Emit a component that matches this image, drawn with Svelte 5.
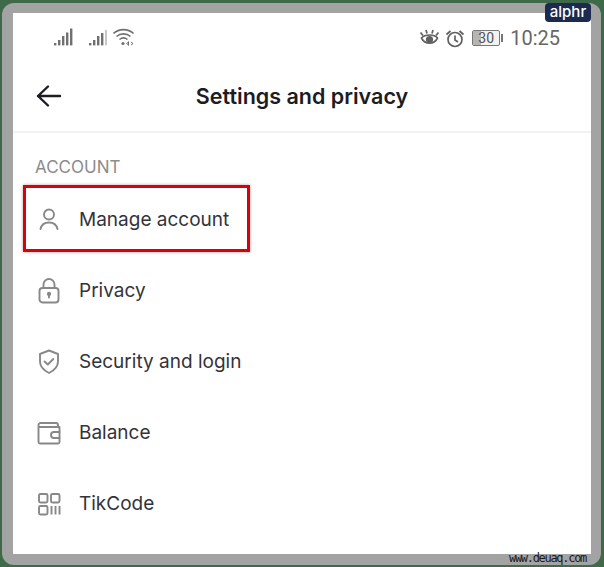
<script lang="ts">
  const rows = [
    { id: 'user', label: 'Manage account', boxed: true },
    { id: 'lock', label: 'Privacy' },
    { id: 'shield', label: 'Security and login' },
    { id: 'wallet', label: 'Balance' },
    { id: 'code', label: 'TikCode' }
  ];
</script>

<div class="page">
  <div class="frame">
    <div class="screen">
      <div class="status">
        <div class="signals">
          <svg class="sig" width="20" height="19" viewBox="0 0 20 19" fill="#707070">
            <rect x="0" y="15" width="2.400" height="2.400" /><rect x="4" y="12" width="2.400" height="5.400" />
            <rect x="8" y="8" width="2.400" height="9.400" /><rect x="12" y="4.500" width="2.400" height="12.900" />
            <rect x="16" y="0.500" width="2.400" height="16.900" />
          </svg>
          <svg class="sig2" width="20" height="19" viewBox="0 0 20 19" fill="#707070">
            <rect x="0" y="15" width="2.400" height="2.400" /><rect x="4" y="12" width="2.400" height="5.400" />
            <rect x="8" y="8" width="2.400" height="9.400" /><rect x="12" y="5" width="2.400" height="12.400" />
            <rect x="16" y="2" width="2" height="15.400" fill="#c8c8c8" />
          </svg>
          <svg width="22" height="19" viewBox="0 0 22 19" fill="none" stroke="#707070" stroke-width="1.600">
            <path d="M0.500 5.500 C6 .3 15 .3 20.500 5.500" /><path d="M3.500 8.500 C7.500 5 13.500 5 17.500 8.500" />
            <path d="M6.500 11.500 C9 9.500 12 9.500 14.500 11.500" />
            <circle cx="10" cy="15.500" r="1.600" fill="#707070" stroke="none" />
            <path d="M15.500 13.500v4M15.500 14l-2 1.500 2 1.500M18 14l2 1.500-2 1.500" stroke-width="1" />
          </svg>
        </div>
        <div class="indicators">
          <svg width="21" height="18" viewBox="0 0 21 18" fill="none" stroke="#606060" stroke-width="1.700">
            <path d="M2.500 9 C6 5 15 5 18.500 9 C15 16 6 16 2.500 9Z" />
            <circle cx="10.500" cy="10.500" r="3.600" fill="#606060" stroke="none" />
            <path d="M1.500 3.500l2.500 3M7 1l1 3.600M14 1l-1 3.600M19.500 3.500l-2.500 3" />
          </svg>
          <svg width="20" height="19" viewBox="0 0 20 19" fill="none" stroke="#606060" stroke-width="1.700">
            <circle cx="10" cy="10.500" r="7" />
            <path d="M10 6.500v4.500l3 2" />
            <path d="M1.500 5.500l4-3.500M18.500 5.500l-4-3.500" />
          </svg>
          <div class="battery">
            <div class="cell"><span class="charge"></span><span class="pct">30</span></div>
            <span class="nub"></span>
          </div>
          <span class="time">10:25</span>
        </div>
      </div>

      <header class="header">
        <svg class="back" width="26" height="24" viewBox="0 0 26 24" fill="none" stroke="#1c1c22" stroke-width="2.400" stroke-linecap="round" stroke-linejoin="round">
          <path d="M2 12h22M12 2.500L2 12l10 9.500" />
        </svg>
        <h1>Settings and privacy</h1>
      </header>

      <div class="section">ACCOUNT</div>

      <ul class="list">
        {#each rows as row}
          <li class="row" class:boxed={row.boxed}>
            <svg width="24" height="26" viewBox="0 0 24 26" fill="none" stroke="#888" stroke-width="1.900" stroke-linecap="round" stroke-linejoin="round">
              {#if row.id === 'user'}
                <circle cx="12" cy="7.500" r="5" />
                <path d="M3.500 22c1-4.500 4-6.500 8.500-6.500s7.500 2 8.500 6.500" />
              {:else if row.id === 'lock'}
                <rect x="2.500" y="10" width="19" height="14.500" rx="3" />
                <path d="M6.500 10V6.500a5.500 5.500 0 0 1 11 0V10" />
                <circle cx="12" cy="16" r="1.200" fill="#888" />
                <path d="M12 16.500v3" />
              {:else if row.id === 'shield'}
                <path d="M12 1.500l9 3.500V12.500c0 5.500-4 9-9 11.500-5-2.500-9-6-9-11.500V5z" />
                <path d="M7.500 12.500l3.300 3 5.500-5.500" />
              {:else if row.id === 'wallet'}
                <path d="M21 6V5a2 2 0 0 0-2-2H3.500a2 2 0 0 0-2 2v17a1.500 1.500 0 0 0 1.500 1.500h18a1.500 1.500 0 0 0 1.500-1.500V7H2" />
                <path d="M22.500 12h-5.500a2.500 2.500 0 0 0 0 6h5.500" />
              {:else}
                <rect x="2" y="3" width="8.500" height="8.500" rx="1.500" />
                <rect x="14" y="3" width="8.500" height="8.500" rx="1.500" />
                <rect x="2" y="15" width="8.500" height="8.500" rx="1.500" />
                <path d="M14.500 15v8.500M18.500 15v8.500M22.500 15v8.500" stroke-linecap="butt" />
              {/if}
            </svg>
            <span>{row.label}</span>
          </li>
        {/each}
      </ul>
    </div>
    <div class="badge">alphr</div>
    <div class="mark">www.deuaq.com</div>
  </div>
</div>

<style>
  :global(body) {
    margin: 0;
    background: #3f6a4a;
  }

  .page {
    width: 604px;
    height: 567px;
    padding: 3px 3px 2px 2px;
    box-sizing: border-box;
  }

  .frame {
    position: relative;
    height: 100%;
    box-sizing: border-box;
    padding: 10px 10px 11px 11px;
    background: #a3a3a3;
    border-radius: 12px;
  }

  .screen {
    height: 100%;
    background: #fff;
    font-family: Inter, "Liberation Sans", sans-serif;
    color: #33333a;
    overflow: hidden;
  }

  .status {
    height: 49px;
    box-sizing: border-box;
    display: flex;
    justify-content: space-between;
    align-items: flex-start;
    padding: 15px 31px 0 41px;
  }

  .signals {
    display: flex;
    align-items: center;
    gap: 4px;
  }

  .sig {
    margin-right: 11px;
  }

  .indicators {
    display: flex;
    align-items: center;
    gap: 5px;
  }

  .battery {
    display: flex;
    align-items: center;
    gap: 1px;
    margin-left: 2px;
  }

  .cell {
    position: relative;
    width: 26px;
    height: 14px;
    border: 1px solid #777;
    border-radius: 2px;
    display: flex;
    align-items: center;
    justify-content: center;
    background: #f2f2f2;
  }

  .charge {
    position: absolute;
    left: 0;
    top: 0;
    bottom: 0;
    width: 8px;
    background: #b5b5b5;
  }

  .pct {
    position: relative;
    font: 14px Roboto, sans-serif;
    color: #555;
  }

  .nub {
    width: 2px;
    height: 8px;
    background: #777;
  }

  .time {
    margin-left: 2px;
    font: 20px/1 Roboto, sans-serif;
    color: #666;
  }

  .header {
    position: relative;
    height: 69px;
    box-sizing: content-box;
    padding-bottom: 0;
    display: flex;
    align-items: flex-start;
    justify-content: center;
    border-bottom: 2px solid #f2f2f2;
  }

  .back {
    position: absolute;
    left: 23px;
    top: 22px;
  }

  h1 {
    margin: 21px 0 0;
    font-size: 21.500px;
    line-height: 26px;
    font-weight: 600;
    color: #1c1c22;
  }

  .section {
    margin: 25px 0 0 22px;
    font-size: 17px;
    line-height: 19px;
    color: #8c8c8c;
  }

  .list {
    list-style: none;
    margin: 8px 0 0 10px;
    padding: 0;
  }

  .row {
    width: 227px;
    height: 67px;
    box-sizing: border-box;
    margin-bottom: 4px;
    padding: 2px 0 0 11px;
    border: 3px solid transparent;
    display: flex;
    align-items: center;
    gap: 18px;
    font-size: 19px;
  }

  .boxed {
    border-color: #d9000d;
    box-shadow: 0 0 3px rgba(120, 0, 0, 0.4);
  }

  .badge {
    position: absolute;
    top: 0;
    right: 10px;
    width: 46px;
    height: 19px;
    border-radius: 4px;
    background: #1b2a4e;
    color: #fff;
    font: 500 15px/18px Inter, sans-serif;
    text-align: center;
  }

  .mark {
    position: absolute;
    right: 15px;
    bottom: 1px;
    font: 12px/11px "DejaVu Sans Mono", monospace;
    letter-spacing: -1.300px;
    color: #1a1a1a;
  }
</style>
